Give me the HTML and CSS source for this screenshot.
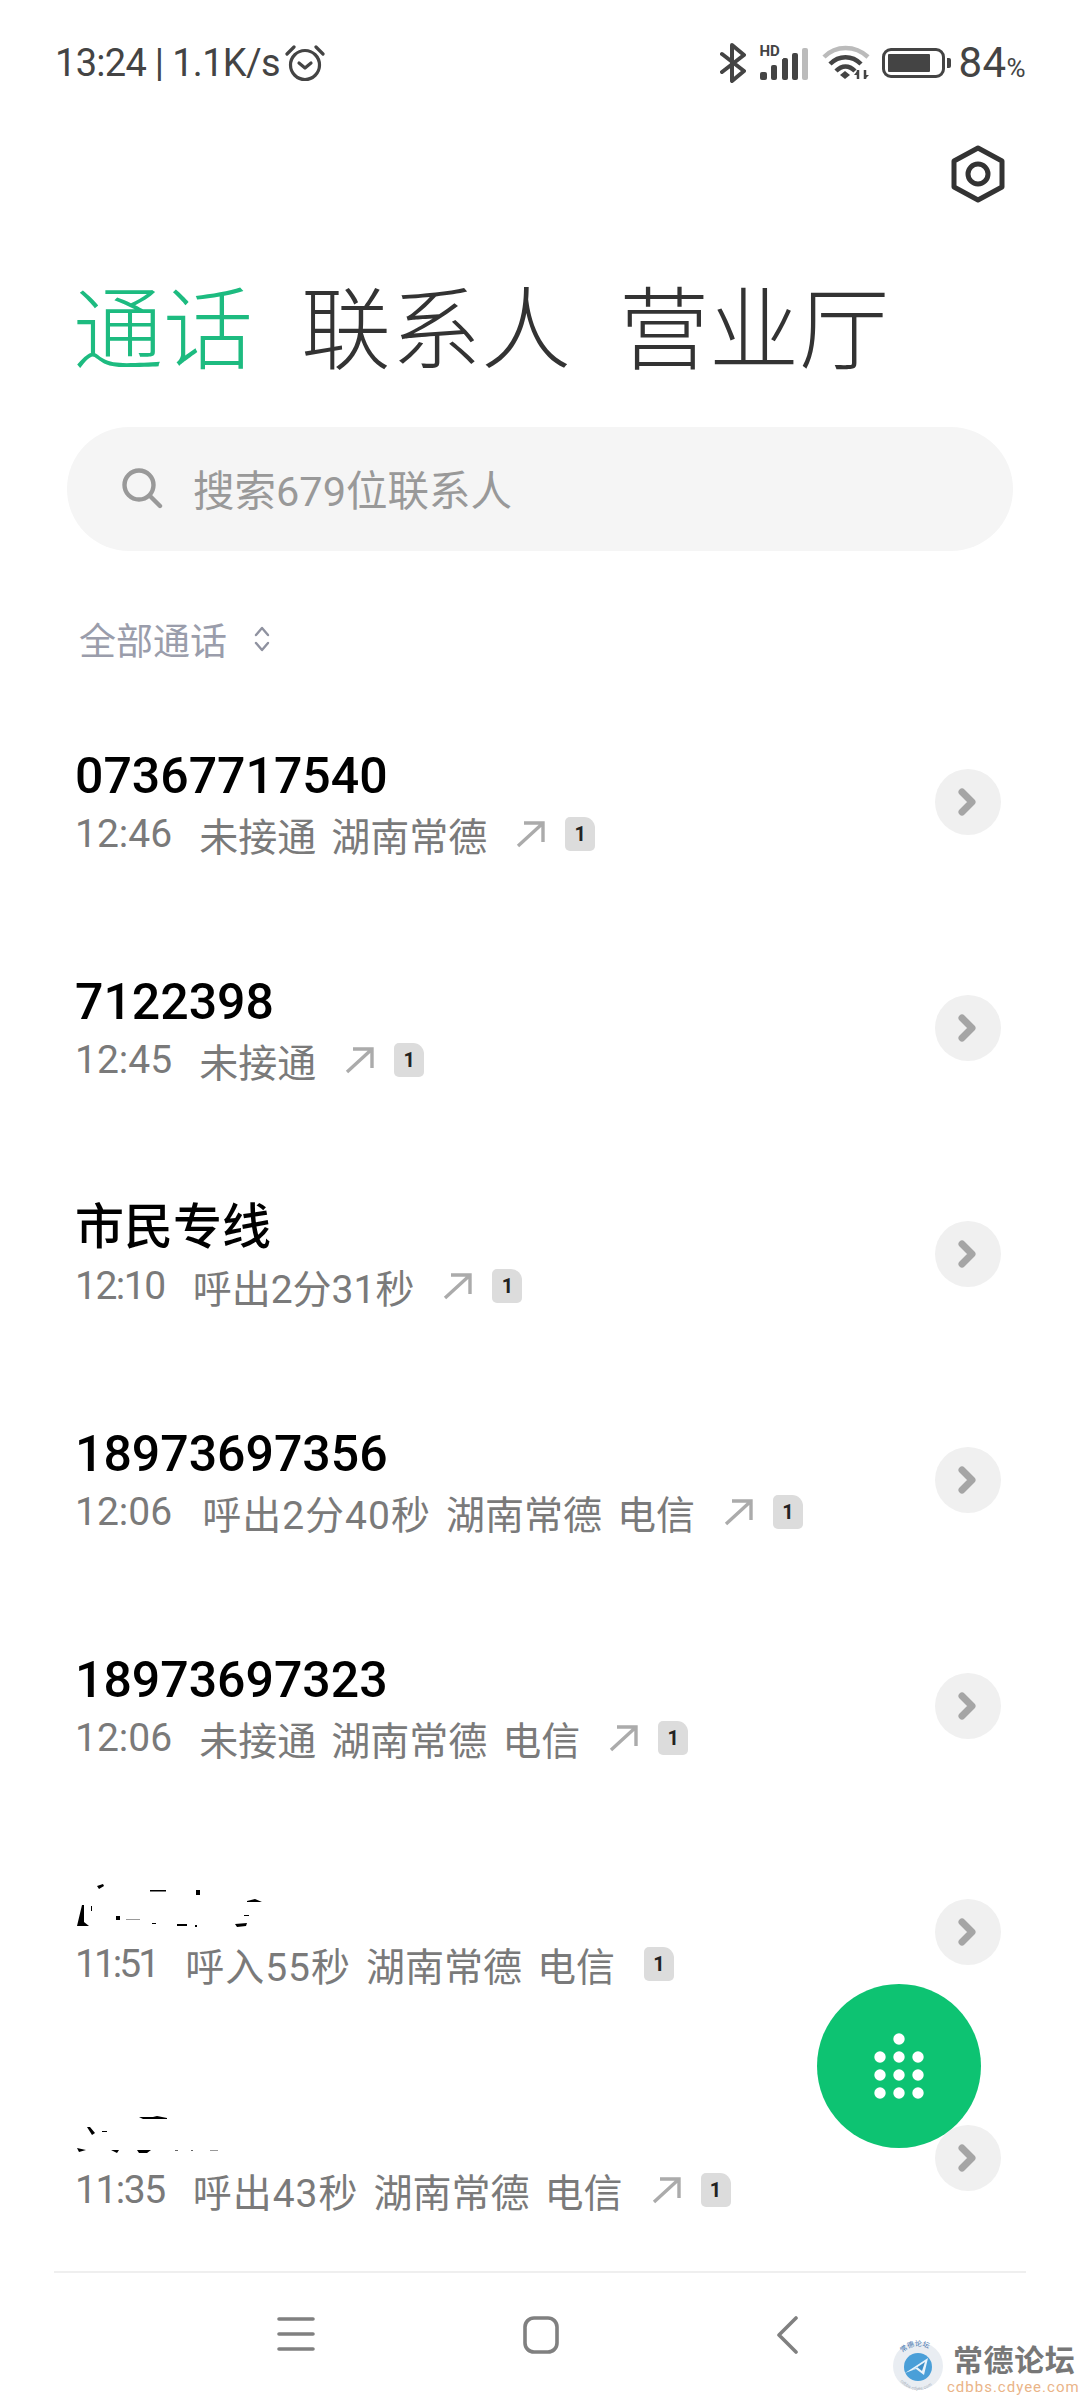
FILE: index.html
```html
<!DOCTYPE html>
<html lang="zh-CN">
<head>
    <meta charset="UTF-8">
    <meta name="viewport" content="width=device-width, initial-scale=1.0">
    <title>通话</title>
    <link rel="stylesheet" href="styles.css">
</head>

<body>
    <!-- shared icons -->
    <svg class="icon-defs" width="0" height="0">
        <symbol id="chevron" viewBox="0 0 66 66">
            <path d="M27 23 L37 33 L27 43" fill="none" stroke="#a5a5a5" stroke-width="7" stroke-linecap="round" stroke-linejoin="round"/>
        </symbol>
        <symbol id="arrow" viewBox="0 0 30 28">
            <path d="M2 26 L26 4 M8 3 H27 V22" fill="none" stroke="#ababab" stroke-width="3.4"/>
        </symbol>
    </svg>

    <div class="phone">
        <div class="status-bar">
            <div class="status-left">
                <span>13:24 | 1.1K/s</span>
                <svg class="alarm" width="40" height="38" viewBox="0 0 40 38" fill="none" stroke="#444" stroke-width="3.2" stroke-linecap="round" stroke-linejoin="round">
                    <circle cx="20" cy="21" r="14.5"/>
                    <path d="M14 19 L20 24 L26 19"/>
                    <path d="M2 10 L9 3 M38 10 L31 3"/>
                </svg>
            </div>
            <div class="status-right">
                <svg width="26" height="40" viewBox="0 0 26 40" fill="none" stroke="#444" stroke-width="4" stroke-linejoin="round" stroke-linecap="round">
                    <path d="M2 11 L24 28 L12 38 V2 L24 12 L2 29"/>
                </svg>
                <div class="signal">
                    <span class="hd">HD</span>
                    <svg width="50" height="32" viewBox="0 0 50 32">
                        <rect x="2" y="24" width="7" height="8" rx="2" fill="#444"/>
                        <rect x="13" y="17" width="6" height="15" rx="2" fill="#444"/>
                        <rect x="24" y="10" width="6" height="22" rx="2" fill="#444"/>
                        <rect x="34" y="5" width="6" height="27" rx="2" fill="#444"/>
                        <rect x="44" y="0" width="6" height="32" rx="2" fill="#bbb"/>
                    </svg>
                </div>
                <svg class="wifi" width="48" height="36" viewBox="0 0 48 36" fill="none" stroke-linecap="butt">
                    <path d="M2 12 C14 0 33 0 46 12" stroke="#bbb" stroke-width="4.5"/>
                    <path d="M8 19 C17 10 30 10 39 19" stroke="#444" stroke-width="4.5"/>
                    <path d="M14 26 C20 20 27 20 33 26" stroke="#444" stroke-width="4.5"/>
                    <path d="M18 30 L23 26 L28 30 L23 34 Z" fill="#444"/>
                    <path d="M36 25 V34 M43 25 V34" stroke="#444" stroke-width="2.5"/>
                    <path d="M32 30 L36 25 L36 30 Z M47 30 L43 34 L43 30 Z" fill="#444"/>
                </svg>
                <div class="battery">
                    <div class="battery-body"><div class="battery-level"></div></div>
                    <div class="battery-tip"></div>
                </div>
                <div class="percent">84<small>%</small></div>
            </div>
        </div>

        <div class="top-action">
            <svg width="56" height="58" viewBox="0 0 56 58" fill="none" stroke="#333" stroke-width="5" stroke-linejoin="round">
                <path d="M28 3 L52 16 V42 L28 55 L4 42 V16 Z"/>
                <circle cx="28" cy="29" r="10"/>
            </svg>
        </div>

        <div class="tabs">
            <span class="tab active">通话</span>
            <span class="tab">联系人</span>
            <span class="tab">营业厅</span>
        </div>

        <div class="search-box">
            <svg width="42" height="42" viewBox="0 0 42 42" fill="none" stroke="#999" stroke-width="4.4" stroke-linecap="round">
                <circle cx="18" cy="18" r="14.5"/>
                <path d="M29 29 L39 39"/>
            </svg>
            <span>搜索679位联系人</span>
        </div>

        <div class="filter">
            <span>全部通话</span>
            <svg width="18" height="28" viewBox="0 0 18 28" fill="none" stroke="#8f92a0" stroke-width="2.4" stroke-linecap="round" stroke-linejoin="round">
                <path d="M3 10 L9 3 L15 10 M3 18 L9 25 L15 18"/>
            </svg>
        </div>

        <div class="call-list">
            <div class="call-row">
                <div class="call-info">
                    <div class="call-name">07367717540</div>
                    <div class="call-sub">
                        <span class="call-time">12:46</span><span>未接通</span><span>湖南常德</span>
                        <svg class="arrow"><use href="#arrow"/></svg><span class="sim">1</span>
                    </div>
                </div>
                <svg class="detail-btn"><use href="#chevron"/></svg>
            </div>
            <div class="call-row">
                <div class="call-info">
                    <div class="call-name">7122398</div>
                    <div class="call-sub">
                        <span class="call-time">12:45</span><span>未接通</span>
                        <svg class="arrow"><use href="#arrow"/></svg><span class="sim">1</span>
                    </div>
                </div>
                <svg class="detail-btn"><use href="#chevron"/></svg>
            </div>
            <div class="call-row">
                <div class="call-info">
                    <div class="call-name name-cjk">市民专线</div>
                    <div class="call-sub">
                        <span class="call-time short">12:10</span><span>呼出2分31秒</span>
                        <svg class="arrow"><use href="#arrow"/></svg><span class="sim">1</span>
                    </div>
                </div>
                <svg class="detail-btn"><use href="#chevron"/></svg>
            </div>
            <div class="call-row">
                <div class="call-info">
                    <div class="call-name">18973697356</div>
                    <div class="call-sub">
                        <span class="call-time wide-gap">12:06</span><span class="duration">呼出2分40秒</span><span>湖南常德</span><span>电信</span>
                        <svg class="arrow"><use href="#arrow"/></svg><span class="sim">1</span>
                    </div>
                </div>
                <svg class="detail-btn"><use href="#chevron"/></svg>
            </div>
            <div class="call-row">
                <div class="call-info">
                    <div class="call-name">18973697323</div>
                    <div class="call-sub">
                        <span class="call-time">12:06</span><span>未接通</span><span>湖南常德</span><span>电信</span>
                        <svg class="arrow"><use href="#arrow"/></svg><span class="sim">1</span>
                    </div>
                </div>
                <svg class="detail-btn"><use href="#chevron"/></svg>
            </div>
            <div class="call-row">
                <div class="call-info">
                    <div class="call-name">
                        <!-- name scrubbed out in the screenshot, only specks are left -->
                        <svg width="200" height="58" viewBox="0 0 200 58" fill="#000">
                            <path d="M22 9 L28 7 L29 9 L24 12 Z M75 13 H91 V14.500 H75 Z M121 13 H125 V18 H121 Z"/>
                            <path d="M2 49 L7 28 L9 28 L9 45 L14 49 Z M16 29 H17 V34 H16 Z M41 39 H45 V43 H41 Z"/>
                            <path d="M77 46 H81 V47 H77 Z M102 47 H112 V49 H102 Z M120 48 H122 V50 H120 Z"/>
                            <path d="M172 24 L180 22 L187 25 H172 Z M169 38 H174 V39 H169 Z M160 47 L172 46 L171 49 L162 50 Z"/>
                            <path d="M51 42 H65 V43 H51 Z" fill="#999"/>
                        </svg>
                    </div>
                    <div class="call-sub">
                        <span class="call-time narrow">11:51</span><span class="duration">呼入55秒</span><span>湖南常德</span><span>电信</span>
                        <span class="sim no-arrow">1</span>
                    </div>
                </div>
                <svg class="detail-btn"><use href="#chevron"/></svg>
            </div>
            <div class="call-row">
                <div class="call-info">
                    <div class="call-name">
                        <svg width="160" height="58" viewBox="0 0 160 58" fill="#000">
                            <path d="M64 14 H78 L82 13 L92 15 V16 H68 Z M12 24 L15 24 L20 30 L17 32 Z M27 28 H32 V29 H27 Z"/>
                            <path d="M2 45 L11 47 L4 49 Z M36 47 H44 L42 50 Z M62 47 H76 L72 50 H64 Z"/>
                            <path d="M100 47 H103 V48 H100 Z M116 47 H118 V48 H116 Z" fill="#666"/>
                            <path d="M135 47 H143 V48 H135 Z" fill="#999"/>
                        </svg>
                    </div>
                    <div class="call-sub">
                        <span class="call-time short">11:35</span><span class="duration">呼出43秒</span><span>湖南常德</span><span>电信</span>
                        <svg class="arrow"><use href="#arrow"/></svg><span class="sim">1</span>
                    </div>
                </div>
                <svg class="detail-btn"><use href="#chevron"/></svg>
            </div>
        </div>

        <div class="nav-bar">
            <svg width="38" height="36" viewBox="0 0 38 36" fill="none" stroke="#808080" stroke-width="3.6" stroke-linecap="round">
                <path d="M2 3 H36 M2 18 H36 M2 33 H36"/>
            </svg>
            <svg width="36" height="38" viewBox="0 0 36 38" fill="none" stroke="#808080" stroke-width="3.6">
                <rect x="2" y="2" width="32" height="34" rx="9"/>
            </svg>
            <svg class="nav-back" width="22" height="38" viewBox="0 0 22 38" fill="none" stroke="#808080" stroke-width="3.6" stroke-linecap="round" stroke-linejoin="round">
                <path d="M20 2 L3 19 L20 36"/>
            </svg>
        </div>

        <div class="dial-fab">
            <svg width="60" height="66" viewBox="0 0 60 66" fill="#fff">
                <circle cx="30" cy="6" r="5.7"/>
                <circle cx="11" cy="24" r="5.7"/><circle cx="30" cy="24" r="5.7"/><circle cx="49" cy="24" r="5.7"/>
                <circle cx="11" cy="42" r="5.7"/><circle cx="30" cy="42" r="5.7"/><circle cx="49" cy="42" r="5.7"/>
                <circle cx="11" cy="60" r="5.7"/><circle cx="30" cy="60" r="5.7"/><circle cx="49" cy="60" r="5.7"/>
            </svg>
        </div>

        <div class="watermark">
            <svg class="watermark-logo" width="50" height="48" viewBox="0 0 50 48">
                <ellipse cx="25" cy="24" rx="25" ry="24" fill="#e9edf2"/>
                <circle cx="25" cy="25" r="14" fill="#4a9fd8"/>
                <path d="M12 31 L35 16 L31 33 L23 27 Z" fill="#e8f3fb"/>
                <path d="M17 30 L32 20 L29 29 L24 25 Z" fill="#3f8fc8"/>
                <path id="ring-top" d="M5 24 A20 20 0 0 1 45 24" fill="none"/>
                <path id="ring-bottom" d="M3 26 A22 22 0 0 0 47 26" fill="none"/>
                <text class="ring-name"><textPath href="#ring-top" startOffset="14">常德论坛</textPath></text>
                <text class="ring-url"><textPath href="#ring-bottom" startOffset="14">cdbbs.cdyee.com</textPath></text>
            </svg>
            <div class="watermark-text">
                <div class="watermark-name">常德论坛</div>
                <div class="watermark-url">cdbbs.cdyee.com</div>
            </div>
        </div>
    </div>
</body>
</html>
```

FILE: styles.css
```css
* {
    box-sizing: border-box;
}

body {
    margin: 0;
    background-color: #ffffff;
    font-family: Roboto, "Noto Sans CJK SC", sans-serif;
}

.icon-defs {
    display: block;
    height: 0;
}

.phone {
    position: relative;
    width: 1080px;
    height: 2400px;
    overflow: hidden;
    background-color: #ffffff;
}

/* status bar */
.status-bar {
    height: 125px;
    padding: 0 54px 0 55px;
    display: flex;
    justify-content: space-between;
    align-items: center;
    color: #444;
}

.status-left {
    display: flex;
    align-items: center;
    gap: 5px;
    font-size: 38px;
    letter-spacing: -0.7px;
}

.status-right {
    display: flex;
    align-items: center;
    gap: 12px;
}

.signal {
    position: relative;
    width: 52px;
    height: 32px;
    margin-top: 2px;
}

.signal svg {
    display: block;
}

.hd {
    position: absolute;
    left: 2px;
    top: -4px;
    font-size: 15px;
    font-weight: 700;
    line-height: 15px;
    background-color: #fff;
    padding-right: 3px;
}

.battery {
    display: flex;
    align-items: center;
    gap: 2px;
}

.battery-body {
    width: 63px;
    height: 30px;
    border: 3.5px solid #444;
    border-radius: 9px;
    padding: 3px;
}

.battery-level {
    width: 42px;
    height: 100%;
    background-color: #444;
    border-radius: 1px;
}

.battery-tip {
    width: 4px;
    height: 10px;
    background-color: #444;
    border-radius: 0 2px 2px 0;
}

.percent {
    font-size: 42px;
    letter-spacing: 0.4px;
    margin-left: -4px;
}

.percent small {
    font-size: 26px;
}

/* header */
.top-action {
    height: 155px;
    padding: 20px 74px 0 0;
    display: flex;
    justify-content: flex-end;
    align-items: flex-start;
}

.tabs {
    display: flex;
    gap: 48px;
    padding-left: 73px;
    height: 103px;
    align-items: center;
}

.tab {
    font-size: 90px;
    line-height: 103px;
    font-weight: 300;
    color: #333;
}

.tab.active {
    color: #1dbb80;
}

.search-box {
    margin: 44px 67px 0 67px;
    height: 124px;
    border-radius: 62px;
    background-color: #f5f5f5;
    display: flex;
    align-items: center;
    gap: 30px;
    padding-left: 54px;
    padding-bottom: 2px;
    font-size: 41.500px;
    color: #999;
}

.filter {
    height: 74px;
    margin-top: 51px;
    padding-left: 79px;
    display: flex;
    align-items: center;
    gap: 26px;
    font-size: 37px;
    color: #9a9dab;
}

/* call list */
.call-list {
    border-bottom: 2px solid #efefef;
    margin: 13px 54px 0 54px;
}

.call-row {
    height: 226px;
    padding: 0 25px 0 22px;
    display: flex;
    justify-content: space-between;
    align-items: center;
}

.call-info {
    margin-top: 6px;
}

.call-name {
    height: 58px;
    font-size: 50px;
    line-height: 58px;
    font-weight: 500;
    color: #000;
    display: flex;
    align-items: center;
    margin-left: -1px;
}

.call-name.name-cjk {
    font-size: 49px;
}

.call-sub {
    height: 58px;
    display: flex;
    align-items: center;
    gap: 15px;
    font-size: 39px;
    color: #7a7a7a;
    margin-left: -1px;
}

.call-time {
    margin-right: 12px;
}

.call-time.wide-gap {
    margin-right: 15px;
}

.call-time.short {
    letter-spacing: -1.5px;
    margin-right: 13px;
}

.call-time.narrow {
    letter-spacing: -3px;
    margin-right: 13px;
}

.duration {
    letter-spacing: 1px;
}

.arrow {
    width: 30px;
    height: 28px;
    margin-left: 14px;
    margin-right: 4px;
}

.sim {
    width: 30px;
    height: 34px;
    background-color: #dcdcdc;
    border-radius: 5px 11px 5px 5px;
    color: #222;
    font-size: 20px;
    font-weight: 700;
    line-height: 34px;
    text-align: center;
}

.sim.no-arrow {
    margin-left: 14px;
}

.detail-btn {
    width: 66px;
    height: 66px;
    border-radius: 50%;
    background-color: #f0f0f0;
}

/* bottom navigation */
.nav-bar {
    padding: 43px 0 0 277px;
    display: flex;
    align-items: flex-start;
    gap: 208px;
}

.nav-back {
    margin-left: 9px;
}

.dial-fab {
    position: absolute;
    left: 817px;
    top: 1984px;
    width: 164px;
    height: 164px;
    border-radius: 50%;
    background-color: #0dc372;
    display: flex;
    align-items: center;
    justify-content: center;
}

.watermark {
    position: absolute;
    left: 893px;
    top: 2342px;
    display: flex;
    align-items: flex-start;
    gap: 4px;
}

.watermark-logo {
    overflow: visible;
}

.ring-name {
    font-size: 7px;
    fill: #4a78b0;
}

.ring-url {
    font-size: 4.500px;
    fill: #a8b0ba;
}

.watermark-name {
    font-size: 30px;
    line-height: 38px;
    font-weight: 700;
    color: #777;
    letter-spacing: 0.6px;
    margin-left: 6px;
}

.watermark-url {
    font-size: 15px;
    line-height: 15px;
    letter-spacing: 1px;
    color: #eab488;
}
```
